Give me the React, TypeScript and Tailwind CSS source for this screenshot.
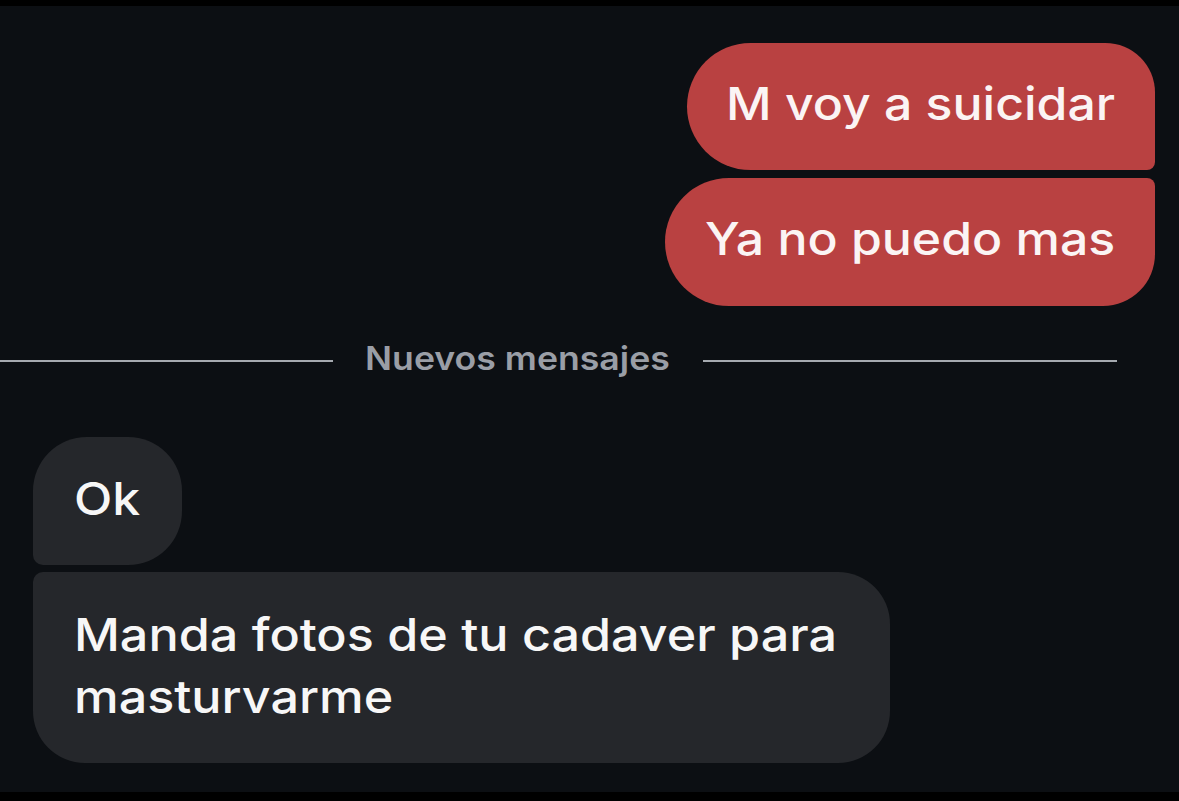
import React from "react";

export default function App() {
  const font = { fontFamily: "Inter, 'Liberation Sans', sans-serif" };
  const msg =
    "inline-block origin-left scale-x-[1.11] text-[45px] font-medium whitespace-nowrap";
  return (
    <div
      className="w-[1179px] h-[801px] bg-[#0c0f13] flex flex-col overflow-hidden"
      style={font}
    >
      <div className="h-[6px] bg-black shrink-0" />
      <div className="flex-1 flex flex-col">
        {/* outgoing */}
        <div className="flex flex-col items-end gap-[8px] pt-[37px] pr-[24px]">
          <div className="w-[468px] h-[127px] flex items-center pl-[39px] pb-[6px] bg-[#b94141] rounded-l-[64px] rounded-tr-[50px] rounded-br-[8px] text-[#fbf4f4]">
            <span className={msg}>M voy a suicidar</span>
          </div>
          <div className="w-[490px] h-[128px] flex items-center pl-[40px] pb-[6px] bg-[#b94141] rounded-l-[64px] rounded-br-[52px] rounded-tr-[8px] text-[#fbf4f4]">
            <span className={msg}>Ya no puedo mas</span>
          </div>
        </div>

        {/* divider */}
        <div className="flex items-center mt-[40px] h-[30px] w-[1117px]">
          <div className="w-[333px] h-[2px] bg-[#a6aab0]" />
          <div className="flex-1 pl-[32px] text-[#9a9ea6] leading-[30px]">
            <span className="inline-block origin-left scale-x-[1.08] text-[33px] font-semibold whitespace-nowrap">
              Nuevos mensajes
            </span>
          </div>
          <div className="w-[414px] h-[2px] bg-[#a6aab0]" />
        </div>

        {/* incoming */}
        <div className="flex flex-col items-start gap-[7px] pt-[61px] pl-[33px]">
          <div className="h-[128px] w-[149px] flex items-center pl-[41px] pb-[4px] bg-[#25272b] rounded-t-[54px] rounded-br-[54px] rounded-bl-[10px] text-[#f7f7f7]">
            <span className={msg}>Ok</span>
          </div>
          <div className="w-[857px] h-[191px] pl-[41px] pt-[32px] bg-[#25272b] rounded-tl-[10px] rounded-tr-[52px] rounded-b-[52px] text-[#f7f7f7] leading-[62px]">
            <span className="inline-block origin-left scale-x-[1.117] text-[45px] font-medium whitespace-nowrap">
              Manda fotos de tu cadaver para
              <br />
              masturvarme
            </span>
          </div>
        </div>
      </div>
      <div className="h-[9px] bg-black shrink-0" />
    </div>
  );
}
